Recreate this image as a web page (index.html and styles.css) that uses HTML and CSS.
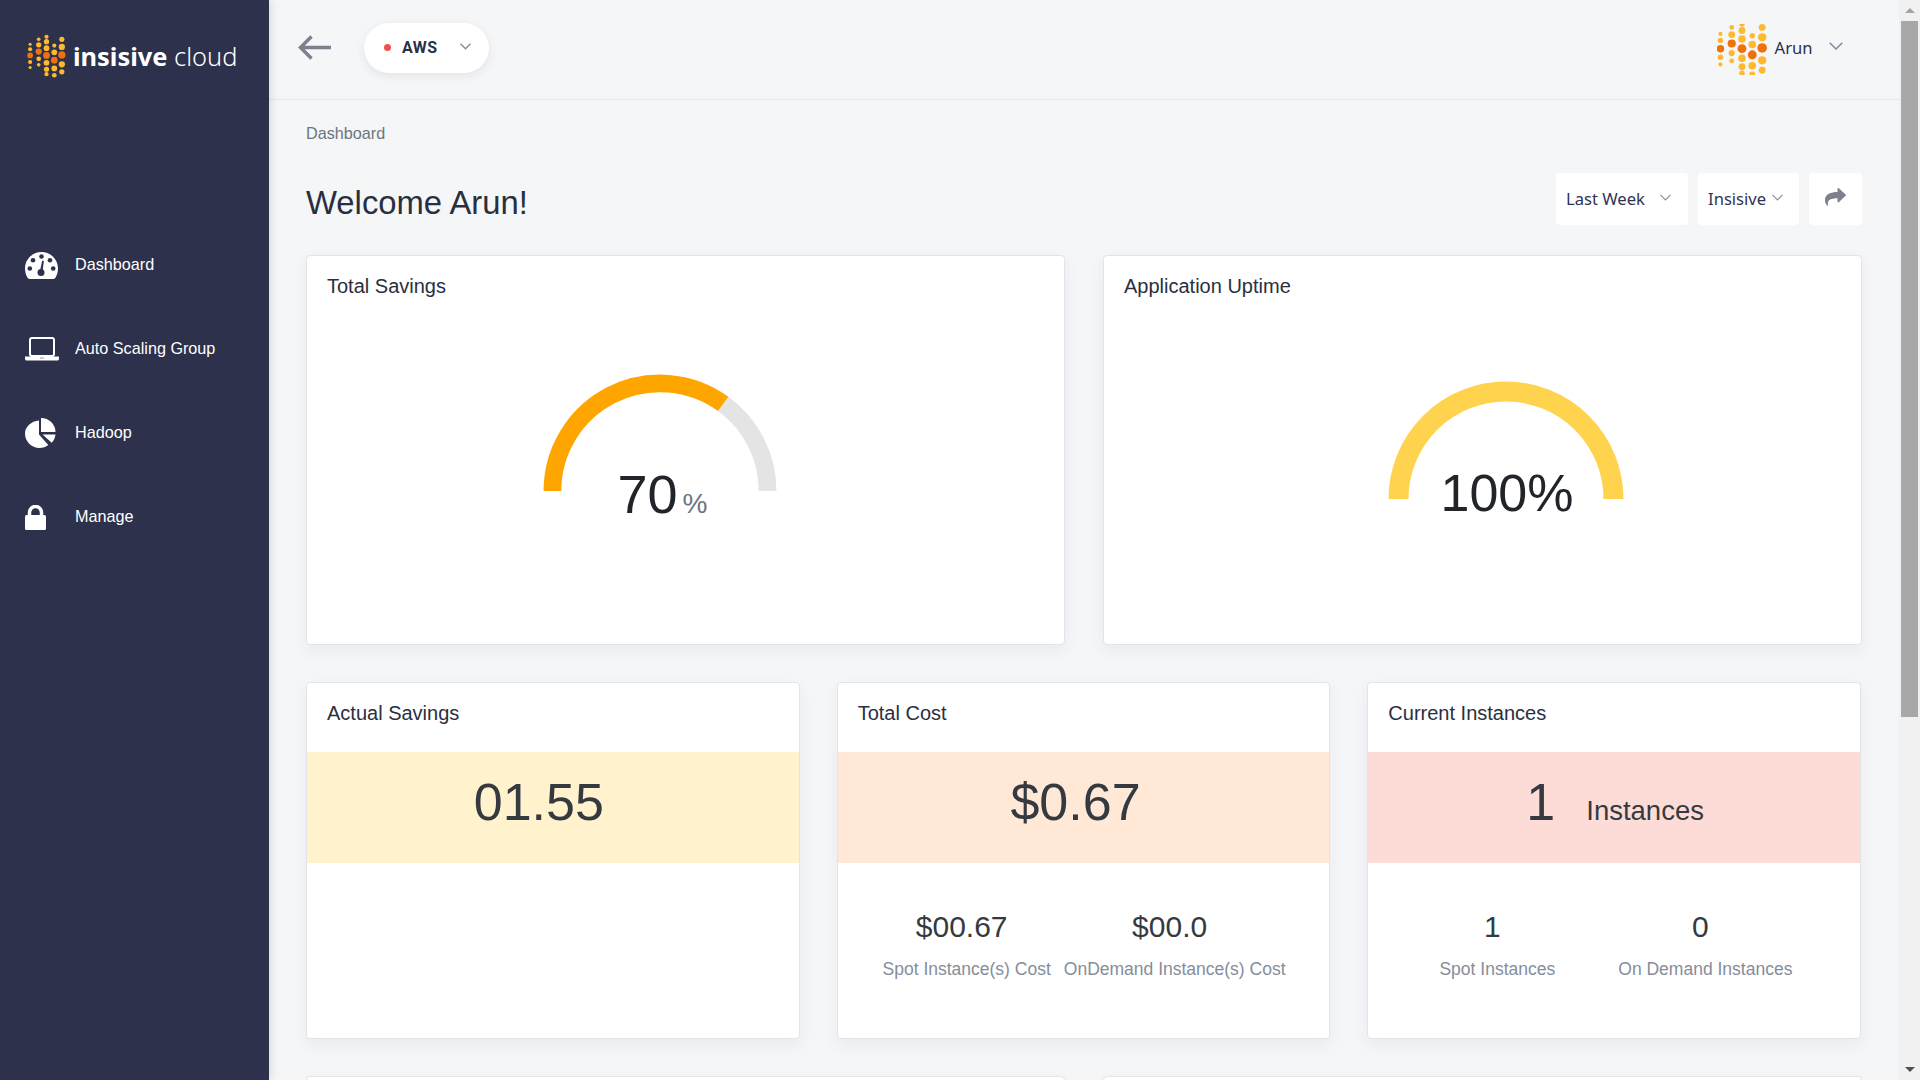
FILE: index.html
```html
<!DOCTYPE html>
<html lang="en">
<head>
<meta charset="utf-8">
<title>Insisive Cloud Dashboard</title>
<link rel="stylesheet" href="styles.css">
</head>
<body>
<div class="app">
  <aside class="sidebar">
    <div class="brand">
      <svg class="brand-mark" viewBox="48 18 150 168" aria-hidden="true">
        <defs>
          <g id="dots">
            <g fill="#ffb92e">
              <circle cx="60" cy="57" r="6"/><circle cx="60" cy="76" r="8"/><circle cx="60" cy="125" r="8"/><circle cx="60" cy="146" r="6"/>
              <circle cx="93" cy="38" r="7"/><circle cx="93" cy="59" r="10"/><circle cx="93" cy="113" r="9"/><circle cx="93" cy="136" r="7"/>
              <circle cx="123" cy="28" r="8"/><circle cx="123" cy="47" r="10"/><circle cx="123" cy="72" r="11"/><circle cx="123" cy="128" r="11"/><circle cx="123" cy="153" r="10"/><circle cx="123" cy="172" r="8"/>
              <circle cx="153" cy="62" r="8"/><circle cx="153" cy="88" r="11"/><circle cx="153" cy="150" r="11"/><circle cx="153" cy="176" r="9"/>
              <circle cx="182" cy="38" r="10"/><circle cx="182" cy="67" r="12"/><circle cx="182" cy="134" r="12"/><circle cx="182" cy="163" r="10"/>
            </g>
            <g fill="#f0700c">
              <circle cx="60" cy="100" r="11"/><circle cx="93" cy="85" r="12"/><circle cx="123" cy="100" r="13"/><circle cx="153" cy="118" r="13"/><circle cx="182" cy="98" r="14"/>
            </g>
          </g>
        </defs>
        <use href="#dots"/>
      </svg>
      <span class="brand-text"><b>insisive</b> cloud</span>
    </div>
    <nav class="menu">
      <a class="menu-item"><span class="menu-icon">
        <svg width="33" height="27" viewBox="0 0 33 27" aria-hidden="true"><path fill="#fff" d="M16.5 0C7.4 0 0 7.3 0 16.4c0 3.500 1 6.700 2.600 9.400.4.700 1.100 1.200 1.900 1.200h24c.8 0 1.500-.5 1.900-1.200 1.600-2.700 2.600-5.900 2.600-9.400C33 7.300 25.600 0 16.500 0z"/><g fill="#2d314b"><circle cx="16.500" cy="4.500" r="2.300"/><circle cx="8" cy="8.300" r="2.300"/><circle cx="25" cy="8.300" r="2.300"/><circle cx="4.800" cy="16.500" r="2.300"/><circle cx="28.200" cy="16.500" r="2.300"/><circle cx="16" cy="20.500" r="3.500"/><path d="M15 19l2.200-10.500 1.700.4L17.500 20z"/></g></svg>
      </span><span>Dashboard</span></a>
      <a class="menu-item"><span class="menu-icon">
        <svg width="34" height="24" viewBox="0 0 34 24" aria-hidden="true"><rect x="5" y="1" width="24" height="18" rx="2" fill="none" stroke="#fff" stroke-width="2"/><path fill="#fff" d="M0 19.500h34v2.200c0 1-.8 1.800-1.800 1.800H1.800C.8 23.500 0 22.700 0 21.700z"/><rect x="15" y="20.500" width="4" height="1" fill="#9a9ca8"/></svg>
      </span><span>Auto Scaling Group</span></a>
      <a class="menu-item"><span class="menu-icon">
        <svg width="31" height="30" viewBox="0 0 31 30" aria-hidden="true"><path fill="#fff" d="M14 2.500C6.100 3 0 9.100 0 15.500 0 23.500 6.500 30 14.500 30c3.300 0 6.400-1.100 8.800-3L14 16.500z"/><path fill="#fff" d="M16 0v14h14.500C30.500 6.300 24 0 16 0z"/><path fill="#fff" d="M17.500 16.500H30.500c-.3 3.200-1.700 6-3.800 8.200z"/></svg>
      </span><span>Hadoop</span></a>
      <a class="menu-item"><span class="menu-icon">
        <svg width="21" height="25" viewBox="0 0 21 25" aria-hidden="true"><path fill="none" stroke="#fff" stroke-width="3.500" d="M4.500 11V7.500a6 6 0 0 1 12 0V11"/><rect x="0" y="10" width="21" height="15" rx="1.500" fill="#fff"/></svg>
      </span><span>Manage</span></a>
    </nav>
  </aside>

  <div class="main">
    <header class="topbar">
      <svg class="back" width="33" height="25" viewBox="0 0 33 25" aria-hidden="true"><path fill="none" stroke="#7d7f8c" stroke-width="3.400" d="M13.500 1.500 2.500 12.500l11 11M3 12.500h30"/></svg>
      <div class="pill">
        <span class="pill-dot"></span>
        <span class="pill-text">AWS</span>
        <svg class="chev" width="11" height="7" viewBox="0 0 11 7" aria-hidden="true"><path fill="none" stroke="#7f8aa3" stroke-width="1.300" d="M.5.8l5 5 5-5"/></svg>
      </div>
      <div class="user">
        <svg class="avatar" viewBox="50 28 146 149" aria-hidden="true"><use href="#dots"/></svg>
        <span class="user-name">Arun</span>
        <svg class="user-chev" width="14" height="8" viewBox="0 0 14 8" aria-hidden="true"><path fill="none" stroke="#7f8aa3" stroke-width="1.500" d="M.7.8 7 7l6.300-6.200"/></svg>
      </div>
    </header>

    <section class="content">
      <div class="crumb">Dashboard</div>
      <div class="heading-row">
        <h1 class="welcome">Welcome Arun!</h1>
        <div class="filters">
          <div class="filter filter-week"><span>Last Week</span><svg width="11" height="7" viewBox="0 0 11 7" aria-hidden="true"><path fill="none" stroke="#8a90a0" stroke-width="1.200" d="M.5.8l5 5 5-5"/></svg></div>
          <div class="filter filter-org"><span>Insisive</span><svg width="11" height="7" viewBox="0 0 11 7" aria-hidden="true"><path fill="none" stroke="#8a90a0" stroke-width="1.200" d="M.5.8l5 5 5-5"/></svg></div>
          <div class="filter filter-share"><svg width="21" height="18" viewBox="0 0 21 18" aria-hidden="true"><path fill="#7d7f8c" d="M20.600 6.500 13.800.3c-.5-.5-1.300-.1-1.300.6v3.200C6 4.200 0 5.700 0 12.500c0 2.300 1.100 4.100 2.500 5.300.3.200.7-.1.600-.5C2 12.800 4.500 10.400 12.500 10.300v3.300c0 .7.800 1.100 1.300.6l6.800-6.400c.4-.5.400-1.300 0-1.300z"/></svg></div>
        </div>
      </div>

      <div class="row-two">
        <article class="card card-tall">
          <h2 class="card-title">Total Savings</h2>
          <div class="gauge gauge-savings">
            <svg width="240" height="120" viewBox="0 0 240 120" aria-hidden="true">
              <path fill="none" stroke="#e4e4e4" stroke-width="17.700" d="M183.200 32.950A107.600 107.600 0 0 1 227.600 120"/>
              <path fill="none" stroke="#ffa500" stroke-width="17.700" d="M12.400 120A107.600 107.600 0 0 1 183.200 32.950"/>
            </svg>
            <div class="gauge-label gauge-label-savings">70<span class="gauge-unit">%</span></div>
          </div>
        </article>
        <article class="card card-tall">
          <h2 class="card-title">Application Uptime</h2>
          <div class="gauge gauge-uptime">
            <svg width="240" height="120" viewBox="0 0 240 120" aria-hidden="true">
              <path fill="none" stroke="#ffd34e" stroke-width="20" d="M12.500 120A107.500 107.500 0 0 1 227.500 120"/>
            </svg>
            <div class="gauge-label gauge-label-uptime">100%</div>
          </div>
        </article>
      </div>

      <div class="row-three">
        <article class="card card-stat">
          <h2 class="card-title">Actual Savings</h2>
          <div class="band band-yellow band-savings">01.55</div>
        </article>
        <article class="card card-stat">
          <h2 class="card-title">Total Cost</h2>
          <div class="band band-orange band-cost">$0.67</div>
          <div class="stats">
            <div class="stat"><div class="stat-value">$00.67</div><div class="stat-label">Spot Instance(s) Cost</div></div>
            <div class="stat"><div class="stat-value">$00.0</div><div class="stat-label">OnDemand Instance(s) Cost</div></div>
          </div>
        </article>
        <article class="card card-stat">
          <h2 class="card-title">Current Instances</h2>
          <div class="band band-red band-inst"><span>1</span><span class="band-unit">Instances</span></div>
          <div class="stats">
            <div class="stat"><div class="stat-value">1</div><div class="stat-label">Spot Instances</div></div>
            <div class="stat"><div class="stat-value">0</div><div class="stat-label">On Demand Instances</div></div>
          </div>
        </article>
      </div>

      <div class="row-two">
        <article class="card card-tall"></article>
        <article class="card card-tall"></article>
      </div>
    </section>
  </div>

  <div class="scrollbar" aria-hidden="true">
    <div class="scroll-btn"><span class="arrow-up"></span></div>
    <div class="scroll-thumb"></div>
    <div class="scroll-rest"></div>
    <div class="scroll-btn"><span class="arrow-down"></span></div>
  </div>
</div>
</body>
</html>
```

FILE: styles.css
```css
* { box-sizing: border-box; }
html, body { margin: 0; height: 100%; overflow: hidden; }
body { font-family: "Liberation Sans", Arial, sans-serif; color: #212529; background: #f5f6f8; }

.app { display: flex; height: 1080px; overflow: hidden; }

/* sidebar */
.sidebar { width: 269px; flex: none; background: #2d314b; box-shadow: 2px 0 8px rgba(0,0,0,.12); position: relative; z-index: 2; }
.brand { display: flex; align-items: center; height: 112px; padding-left: 27px; }
.brand-mark { width: 39px; height: 44px; flex: none; }
.brand-text { margin-left: 7px; font-family: "Noto Sans", sans-serif; font-size: 25.4px; font-weight: 300; color: #fff; white-space: nowrap; }
.brand-text b { font-weight: 700; }
.menu { display: flex; flex-direction: column; padding-top: 110px; }
.menu-item { display: flex; align-items: center; height: 84px; color: #fff; font-size: 16.2px; }
.menu-icon { width: 75px; padding-left: 25px; display: flex; align-items: center; flex: none; margin-top: 2px; }

/* main column */
.main { flex: 1; min-width: 0; display: flex; flex-direction: column; }
.topbar { height: 100px; flex: none; display: flex; align-items: center; padding: 0 0 4px 30px; border-bottom: 1px solid #e3e5e9; }
.back { flex: none; margin-left: -1px; }
.pill { display: flex; align-items: center; width: 125px; height: 50px; margin-left: 33px; padding-left: 20px; background: #fff; border-radius: 25px; box-shadow: 0 3px 10px rgba(40,45,70,.09); }
.pill-dot { width: 7px; height: 7px; border-radius: 50%; background: #f4504a; flex: none; }
.pill-text { margin-left: 11px; font-family: Roboto, sans-serif; font-weight: 700; font-size: 16px; color: #2a2f4a; letter-spacing: .4px; }
.chev { margin-left: 23px; margin-top: -3px; }
.user { display: flex; align-items: center; margin-left: auto; margin-right: 56px; }
.avatar { width: 50px; height: 51px; flex: none; margin-top: 3px; margin-right: -1px; }
.user-name { margin-left: 9px; font-family: "Noto Sans", sans-serif; font-size: 16.6px; color: #2a2f4a; }
.user-chev { margin-left: 16.500px; margin-top: -3px; }

.content { padding: 23px 37px 0 37px; }
.crumb { font-size: 16.2px; line-height: 20px; color: #6c757d; }
.heading-row { display: flex; justify-content: space-between; align-items: flex-start; margin-top: 30px; height: 82px; }
.welcome { margin: 10px 0 0; font-size: 32.8px; font-weight: 400; line-height: 40px; color: #2a2f3f; }
.filters { display: flex; gap: 10px; }
.filter { display: flex; align-items: center; height: 52px; background: #fff; border-radius: 4px; font-family: "Noto Sans", sans-serif; font-size: 16.6px; color: #2f3454; }
.filter span { margin-top: -2px; }
.filter svg { margin-top: -4px; }
.filter-week { width: 132px; padding-left: 10px; gap: 15px; }
.filter-org { width: 101px; padding-left: 10px; gap: 6px; }
.filter-share { width: 53px; justify-content: center; }

.row-two { display: grid; grid-template-columns: 1fr 1fr; gap: 38px; margin-bottom: 37px; }
.row-three { display: grid; grid-template-columns: repeat(3, 1fr); gap: 37px; margin-bottom: 37px; padding-right: 1px; }

.card { background: #fff; border: 1px solid #e2e4e8; border-radius: 4px; box-shadow: 0 6px 16px rgba(50,55,80,.06); }
.card-tall { height: 390px; }
.card-stat { height: 357px; }
.card-title { margin: 0; height: 69px; padding: 14px 20px 0; font-size: 20px; font-weight: 400; line-height: 32px; color: #2a2f3f; }

/* gauges */
.gauge { position: relative; width: 240px; height: 120px; }
.gauge svg { display: block; }
.gauge-savings { margin: 46px 0 0 233px; }
.gauge-uptime { margin: 54px 0 0 282px; }
.gauge-label { position: absolute; left: 0; right: 0; text-align: center; line-height: 1; color: #212529; white-space: nowrap; }
.gauge-label-savings { top: 96px; font-size: 54px; padding-left: 5px; }
.gauge-label-uptime { top: 88px; font-size: 52px; padding-left: 2px; }
.gauge-unit { margin-left: 5px; font-size: 28px; color: #6c757d; }

/* stat bands */
.band { height: 111px; padding-top: 24px; text-align: center; font-size: 52px; line-height: 1; color: #343a40; white-space: nowrap; }
.band-yellow { background: #fff2cc; }
.band-orange { background: #ffe8d6; }
.band-red { background: #fddcd8; }
.band-savings { padding-right: 28px; }
.band-cost { padding-right: 16px; }
.band-inst { padding-left: 2px; }
.band-unit { margin-left: 31px; font-size: 27.5px; }

.stats { display: grid; grid-template-columns: 208px 208px; padding: 49px 0 0 25px; }
.stat { display: flex; flex-direction: column; align-items: center; white-space: nowrap; }
.stat-value { font-size: 30px; line-height: 30px; color: #343a40; padding-right: 10px; }
.stat-label { margin-top: 15px; font-size: 17.5px; line-height: 24px; color: #858d9c; }

/* scrollbar */
.scrollbar { width: 21px; flex: none; background: #f1f1f1; display: flex; flex-direction: column; align-items: center; }
.scroll-btn { height: 21px; width: 100%; flex: none; display: flex; align-items: center; justify-content: center; }
.scroll-thumb { width: 17px; height: 696px; flex: none; background: #a8a8a8; }
.scroll-rest { flex: 1; }
.arrow-up { width: 0; height: 0; border: 5px solid transparent; border-top: 0; border-bottom: 5px solid #a3a3a3; }
.arrow-down { width: 0; height: 0; border: 5px solid transparent; border-bottom: 0; border-top: 5px solid #505050; }
```
